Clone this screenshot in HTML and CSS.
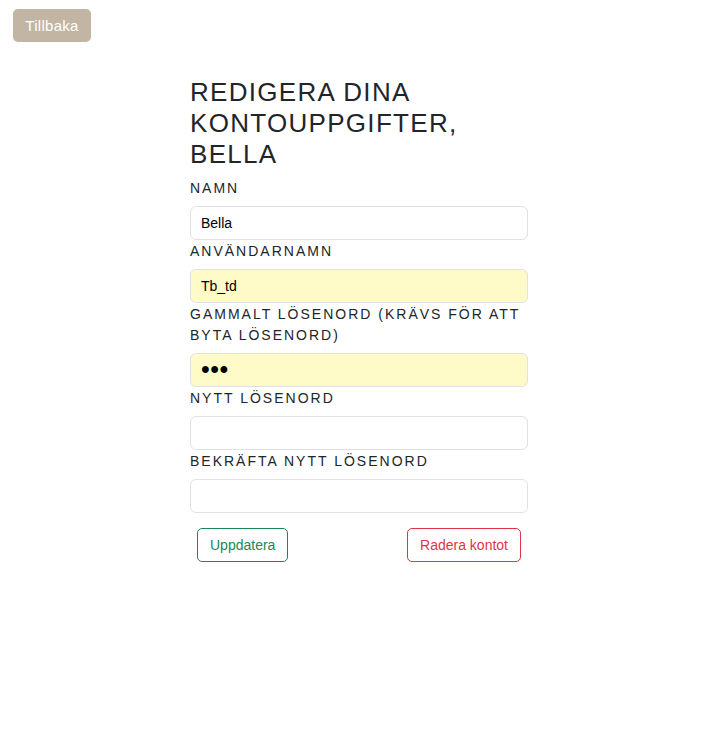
FILE: index.html
```html
<!DOCTYPE html>
<html lang="sv">
<head>
<meta charset="utf-8">
<title>Redigera konto</title>
<link rel="stylesheet" href="styles.css">
</head>
<body>
<header class="topbar">
  <button class="btn-back" type="button">Tillbaka</button>
</header>
<main class="wrap">
  <form class="account-form">
    <h1 class="title">REDIGERA DINA KONTOUPPGIFTER, BELLA</h1>
    <label class="label" for="name">Namn</label>
    <input class="field" id="name" type="text" value="Bella">
    <label class="label" for="user">Användarnamn</label>
    <input class="field autofill" id="user" type="text" value="Tb_td">
    <label class="label" for="old">Gammalt lösenord (krävs för att byta lösenord)</label>
    <input class="field autofill pw" id="old" type="password" value="abc">
    <label class="label" for="new">Nytt lösenord</label>
    <input class="field" id="new" type="password">
    <label class="label" for="confirm">Bekräfta nytt lösenord</label>
    <input class="field" id="confirm" type="password">
    <div class="actions">
      <button class="btn btn-green" type="button">Uppdatera</button>
      <button class="btn btn-red" type="button">Radera kontot</button>
    </div>
  </form>
</main>
</body>
</html>
```
FILE: styles.css
```css
* { box-sizing: border-box; }
html, body { margin: 0; padding: 0; background: #fff; }
body {
  font-family: "Liberation Sans", Arial, sans-serif;
  color: #212529;
}
.topbar {
  padding: 9px 0 0 13px;
  height: 42px;
}
.btn-back {
  font-family: inherit;
  font-size: 15px;
  letter-spacing: 0.3px;
  color: #fff;
  background: #c2b5a3;
  border: 0;
  border-radius: 5px;
  height: 33px;
  padding: 0 10px;
  width: 78px;
  line-height: 33px;
}
.wrap {
  display: flex;
  justify-content: center;
  padding-top: 34px;
}
.account-form {
  width: 338px;
  margin-left: 2px;
  display: flex;
  flex-direction: column;
}
.title {
  margin: 0 0 6px;
  padding-top: 1px;
  font-size: 26px;
  font-weight: 400;
  line-height: 31.2px;
  letter-spacing: 1.3px;
}
.label {
  font-size: 14px;
  line-height: 21px;
  letter-spacing: 2px;
  text-transform: uppercase;
  padding-top: 1px;
  margin-bottom: 7px;
}
.field {
  display: block;
  width: 100%;
  height: 34px;
  padding: 0 10px;
  font-family: inherit;
  font-size: 14px;
  color: #000;
  background: #fff;
  border: 1px solid #dee2e6;
  border-radius: 6px;
  outline: none;
}
.field.autofill { background: #fffbc8; }
.field.pw { font-size: 25px; letter-spacing: 0.5px; padding-left: 10px; }
.actions {
  display: flex;
  justify-content: space-between;
  padding: 15px 7px 0;
}
.btn {
  font-family: inherit;
  font-size: 14px;
  height: 34px;
  padding: 0 12px;
  background: #fff;
  border: 1px solid;
  border-radius: 5px;
}
.btn-green { color: #198754; border-color: #198754; }
.btn-red { color: #dc3545; border-color: #dc3545; }
```
